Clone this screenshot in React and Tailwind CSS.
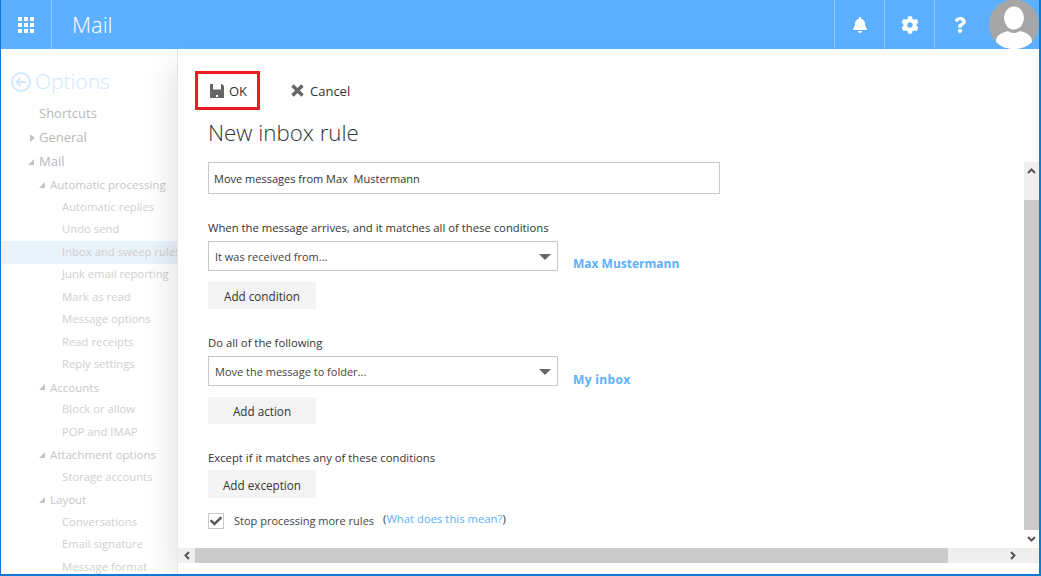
import { FaBell, FaCog, FaQuestion, FaCheck } from 'react-icons/fa';

const navItems = [
	{ label: 'Shortcuts', level: 1, height: 'h-[24.5px]' },
	{ label: 'General', level: 1, height: 'h-[24.5px]', arrow: 'right' },
	{ label: 'Mail', level: 1, height: 'h-[24px]', arrow: 'down' },
	{ label: 'Automatic processing', level: 2, height: 'h-[22px]', arrow: 'down' },
	{ label: 'Automatic replies', level: 3 },
	{ label: 'Undo send', level: 3 },
	{ label: 'Inbox and sweep rules', level: 3, active: true },
	{ label: 'Junk email reporting', level: 3 },
	{ label: 'Mark as read', level: 3 },
	{ label: 'Message options', level: 3 },
	{ label: 'Read receipts', level: 3 },
	{ label: 'Reply settings', level: 3 },
	{ label: 'Accounts', level: 2, arrow: 'down' },
	{ label: 'Block or allow', level: 3 },
	{ label: 'POP and IMAP', level: 3 },
	{ label: 'Attachment options', level: 2, arrow: 'down' },
	{ label: 'Storage accounts', level: 3 },
	{ label: 'Layout', level: 2, arrow: 'down' },
	{ label: 'Conversations', level: 3 },
	{ label: 'Email signature', level: 3 },
	{ label: 'Message format', level: 3 },
];

const levelClasses = {
	1: 'pl-[38px] text-[13px] text-[#b8b8b8]',
	2: 'pl-[49px] text-[11.5px] text-[#c6c6c6]',
	3: 'pl-[61px] text-[11.3px] text-[#cfcfcf]',
};

function Waffle() {
	return (
		<div className="grid grid-cols-3 gap-[2px]">
			{Array.from({ length: 9 }).map((_, i) => (
				<div key={i} className="h-[4px] w-[4px] bg-white"></div>
			))}
		</div>
	);
}

function HeaderButton({ children }) {
	return (
		<div className="flex h-full w-[50px] items-center justify-center border-l border-[#8ec8ff] text-white">
			{children}
		</div>
	);
}

function Avatar() {
	return (
		<svg width="50" height="49" viewBox="0 0 50 49" className="shrink-0">
			<circle cx="25" cy="24.5" r="25" fill="#a6a6a6" />
			<ellipse cx="25" cy="18" rx="10" ry="11.5" fill="#fff" />
			<path d="M7 42 C7 35 12 33 19 31 C22 33.5 28 33.5 31 31 C38 33 43 35 43 42 C38 47 32 49 25 49 C18 49 12 47 7 42 Z" fill="#fff" />
		</svg>
	);
}

function SaveIcon() {
	return (
		<svg width="14" height="14" viewBox="0 0 14 14" className="shrink-0">
			<path d="M0 0H12L14 2V14H0Z" fill="#666" />
			<path d="M3 0H11V5.5H3Z" fill="#fff" />
			<path d="M6 11H8V13H6Z" fill="#fff" />
		</svg>
	);
}

function CloseIcon() {
	return (
		<svg width="13" height="13" viewBox="0 0 13 13" fill="none" stroke="#666" strokeWidth="3.4" className="shrink-0">
			<path d="M1.5 1.5L11.5 11.5M11.5 1.5L1.5 11.5" />
		</svg>
	);
}

function NavArrow({ dir }) {
	if (dir === 'right') {
		return <span className="absolute -ml-[9px] mt-[1px] h-0 w-0 border-y-[4px] border-l-[5px] border-y-transparent border-l-[#c4c4c4]"></span>;
	}
	return <span className="absolute -ml-[11px] h-0 w-0 border-b-[6px] border-l-[6px] border-b-[#c4c4c4] border-l-transparent"></span>;
}

function Sidebar() {
	return (
		<div className="w-[176px] shrink-0 overflow-hidden whitespace-nowrap">
			<div className="mb-[2px] mt-[16px] flex h-[34px] items-center pl-[10px]">
				<svg width="20" height="20" viewBox="0 0 20 20" fill="none" stroke="#cfe7ff" strokeWidth="2">
					<circle cx="10" cy="10" r="9" />
					<path d="M15 10H6M9.5 6L5.5 10L9.5 14" />
				</svg>
				<span className="ml-[4px] text-[21px] font-light text-[#cfe7ff]">Options</span>
			</div>
			{navItems.map((item) => (
				<div
					key={item.label}
					className={`flex items-center ${item.height || 'h-[22.5px]'} ${levelClasses[item.level]} ${item.active ? 'bg-[#e9f3fc]' : ''}`}>
					{item.arrow && <NavArrow dir={item.arrow} />}
					{item.label}
				</div>
			))}
		</div>
	);
}

function GreyButton({ tall, children }) {
	return (
		<button
			type="button"
			className={`block w-[108px] bg-[#f4f4f4] text-center text-[11.7px] text-[#333] ${tall ? 'h-[28px] pt-[4px]' : 'h-[27px] pt-[2px]'}`}>
			{children}
		</button>
	);
}

function Dropdown({ value, link, linkClass }) {
	return (
		<div className="flex items-end">
			<div className="flex h-[30px] w-[350px] items-center justify-between border border-[#c8c8c8] pl-[6px] pr-[5px] pt-[2px] text-[11px] text-[#444]">
				{value}
				<span className="mr-[1px] h-0 w-0 border-x-[6px] border-t-[6px] border-x-transparent border-t-[#666]"></span>
			</div>
			<span className={`ml-[15px] text-[12px] font-bold text-[#5cb0ff] ${linkClass}`}>{link}</span>
		</div>
	);
}

function ScrollChevron({ d }) {
	return (
		<svg width="9" height="7" viewBox="0 0 9 7" fill="none" stroke="#555" strokeWidth="2">
			<path d={d} />
		</svg>
	);
}

export default function App() {
	return (
		<div
			className="flex h-[576px] w-[1041px] flex-col overflow-hidden border-b-2 border-l border-r-2 border-[#0f7ad5] bg-white text-[#333]"
			style={{ fontFamily: '"Open Sans", "Noto Sans", sans-serif' }}>
			{/* top bar */}
			<div className="-mr-[2px] flex h-[49px] shrink-0 items-center bg-[#5cb0ff]">
				<div className="flex h-full w-[51px] items-center justify-center border-r border-[#8ec8ff]">
					<Waffle />
				</div>
				<div className="ml-[20px] flex-1 text-[22px] font-light text-white">Mail</div>
				<HeaderButton><FaBell size={16} /></HeaderButton>
				<HeaderButton><FaCog size={18} /></HeaderButton>
				<HeaderButton><FaQuestion size={16} /></HeaderButton>
				<div className="w-[5px] shrink-0"></div>
				<Avatar />
				<div className="h-full w-[2px] shrink-0 bg-[#0f7ad5]"></div>
			</div>

			<div className="flex min-h-0 flex-1">
				<Sidebar />

				<div className="relative flex min-w-0 flex-1 flex-col border-l border-[#e6e6e6] bg-white shadow-[-12px_10px_28px_-8px_rgba(0,0,0,0.12)]">
					{/* toolbar */}
					<div className="flex h-[61px] shrink-0 items-end pl-[17px]">
						<div className="flex h-[39px] w-[65px] items-center border-[3px] border-[#ed1c24] pl-[12px] text-[13px] text-[#333]">
							<SaveIcon />
							<span className="ml-[5px] pt-[2px]">OK</span>
						</div>
						<div className="ml-[31px] flex h-[39px] items-center text-[13px] text-[#333]">
							<CloseIcon />
							<span className="ml-[6px] pt-[2px]">Cancel</span>
						</div>
					</div>
					<div className="h-[52px] shrink-0 pl-[30px] pt-[6px] text-[22.3px] font-light leading-[34px] text-[#333]">New inbox rule</div>

					<div className="flex min-h-0 flex-1">
						{/* form */}
						<div className="min-w-0 flex-1 pl-[30px] text-[11.3px]">
							<div className="flex h-[32px] w-[512px] items-center border border-[#c8c8c8] pl-[5px] pt-[2px] text-[11px] text-[#333]">
								Move messages from Max&nbsp; Mustermann
							</div>
							<div className="mb-[5px] mt-[25px] h-[17px] leading-[17px]">When the message arrives, and it matches all of these conditions</div>
							<Dropdown value="It was received from..." link="Max Mustermann" linkClass="-mb-[2px]" />
							<div className="mt-[11px]"><GreyButton>Add condition</GreyButton></div>
							<div className="mb-[5px] mt-[25px] h-[17px] leading-[17px]">Do all of the following</div>
							<Dropdown value="Move the message to folder..." link="My inbox" linkClass="-mb-[3px] tracking-[0.35px]" />
							<div className="mt-[11px]"><GreyButton>Add action</GreyButton></div>
							<div className="mb-[4px] mt-[25px] h-[17px] leading-[17px]">Except if it matches any of these conditions</div>
							<GreyButton tall>Add exception</GreyButton>
							<div className="mt-[15px] flex items-center">
								<span className="flex h-[16px] w-[16px] items-center justify-center border border-[#c8c8c8]">
									<FaCheck size={12} className="text-[#555]" />
								</span>
								<span className="ml-[10px] text-[11px] text-[#444]">Stop processing more rules</span>
								<span className="-mt-[4px] ml-[9px] text-[11.3px] text-[#5cb0ff]">
									<span className="text-[#333]">(</span>What does this mean?<span className="text-[#333]">)</span>
								</span>
							</div>
						</div>
						{/* vertical scrollbar */}
						<div className="flex w-[15px] shrink-0 flex-col bg-[#efefef]">
							<div className="flex h-[16px] items-center justify-center"><ScrollChevron d="M1 6L4.5 2.5L8 6" /></div>
							<div className="mt-[22px] flex-1 bg-[#cbcbcb]"></div>
							<div className="flex h-[18px] items-center justify-center bg-white"><ScrollChevron d="M1 1L4.5 4.5L8 1" /></div>
						</div>
					</div>

					{/* horizontal scrollbar */}
					<div className="mb-[11px] flex h-[15px] shrink-0 items-center bg-[#efefef]">
						<div className="flex h-full w-[17px] items-center justify-center">
							<svg width="7" height="9" viewBox="0 0 7 9" fill="none" stroke="#555" strokeWidth="2"><path d="M6 1L2.5 4.5L6 8" /></svg>
						</div>
						<div className="h-full w-[753px] bg-[#cbcbcb]"></div>
						<div className="flex h-full flex-1 items-center justify-end pr-[22px]">
							<svg width="7" height="9" viewBox="0 0 7 9" fill="none" stroke="#555" strokeWidth="2"><path d="M1 1L4.5 4.5L1 8" /></svg>
						</div>
					</div>
				</div>
			</div>
		</div>
	);
}
